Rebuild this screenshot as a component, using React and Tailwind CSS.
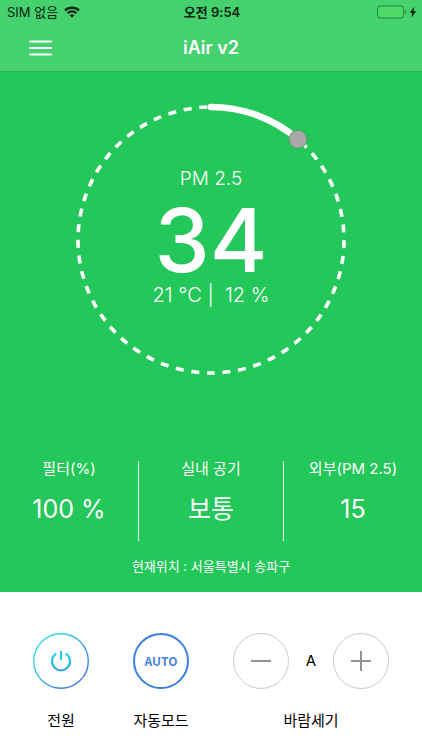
import React from "react";

function StatusBar() {
  return (
    <div className="grid grid-cols-3 items-center h-6 pb-px pl-[7px] pr-[5px] text-[13px] leading-4 text-[#0b2413]">
      <div className="flex items-center gap-1.5">
        <span className="whitespace-nowrap">SIM 없음</span>
        <svg aria-hidden="true" className="w-4 h-3" viewBox="0 0 16 12" fill="none" stroke="#06200e" strokeWidth="2.2">
          <path d="M1 4.4a10 10 0 0 1 14 0" />
          <path d="M3.7 7.2a6.2 6.2 0 0 1 8.6 0" />
          <path d="M8 11.8 5.6 9.3a3.5 3.5 0 0 1 4.8 0z" fill="#06200e" stroke="none" />
        </svg>
      </div>
      <span className="text-center font-semibold whitespace-nowrap">오전 9:54</span>
      <svg aria-hidden="true" className="w-10 h-4 justify-self-end" viewBox="0 0 40 16">
        <rect x="0.5" y="2" width="26" height="12" rx="2.5" fill="#4cd964" stroke="#21873f" />
        <path d="M28 6v4c1.6-.5 1.6-3.5 0-4z" fill="#21873f" />
        <path d="M37.5 2.5 32.8 8.800h2.600L34.300 13.500 39.200 7.300h-2.900z" fill="#06200e" />
      </svg>
    </div>
  );
}

function Gauge() {
  return (
    <div className="grid place-items-center">
      <svg aria-hidden="true" className="col-start-1 row-start-1 w-[280px] h-[280px]" viewBox="0 0 280 280" fill="none">
        <circle cx="140" cy="140" r="133" stroke="#fff" strokeWidth="3.6" strokeDasharray="8 7.767" strokeDashoffset="4" transform="rotate(90 140 140)" />
        <path d="M140 7A133 133 0 0 1 226.9 39.32" stroke="#fff" strokeWidth="6.6" strokeLinecap="round" />
        <circle cx="226.9" cy="39.3" r="9" fill="#a9a9a9" stroke="#559765" strokeWidth="1" />
      </svg>
      <div className="col-start-1 row-start-1 flex flex-col items-center pb-1.5">
        <p className="text-[19px] leading-6 font-light">PM 2.5</p>
        <p className="text-[88px] leading-[98px] font-medium">34</p>
        <p className="-mt-1.5 text-[20px] leading-6 font-light whitespace-pre">21 °C |  12 %</p>
      </div>
    </div>
  );
}

function Reading({ label, value }) {
  return (
    <div className="flex flex-col items-center h-20">
      <dt className="text-[15px] leading-4 whitespace-nowrap">{label}</dt>
      <dd className="mt-4 text-[25px] leading-8 whitespace-nowrap">{value}</dd>
    </div>
  );
}

function RoundButton({ label, className, children }) {
  return (
    <button type="button" aria-label={label} className={"flex items-center justify-center w-14 h-14 shrink-0 rounded-full " + className}>
      {children}
    </button>
  );
}

function Controls() {
  return (
    <section className="flex justify-between px-[33px] pt-[41px] pb-4 bg-white text-black text-[15px] leading-6">
      <div className="flex flex-col items-center gap-5">
        <RoundButton label="전원" className="">
          <svg aria-hidden="true" className="w-14 h-14" viewBox="0 0 56 56" fill="none">
            <defs>
              <linearGradient id="ring" x1="0" y1="0" x2="1" y2="1">
                <stop offset="0.25" stopColor="#38d5e8" />
                <stop offset="0.85" stopColor="#3f7be0" />
              </linearGradient>
              <linearGradient id="power" x1="0" y1="0" x2="0" y2="1">
                <stop offset="0" stopColor="#23d5e8" />
                <stop offset="1" stopColor="#35a6dc" />
              </linearGradient>
            </defs>
            <circle cx="28" cy="28" r="27.3" stroke="url(#ring)" strokeWidth="1.4" />
            <path d="M23.3 20.6a9 9 0 1 0 9.400 0" stroke="url(#power)" strokeWidth="2.2" />
            <rect x="27" y="18" width="2" height="9" fill="#23cfe6" />
          </svg>
        </RoundButton>
        <span>전원</span>
      </div>
      <div className="flex flex-col items-center gap-5">
        <RoundButton label="자동모드" className="border-2 border-[#3a80e0] text-[12px] font-bold text-[#4584dc] font-['Noto_Sans_CJK_KR',sans-serif]">
          AUTO
        </RoundButton>
        <span>자동모드</span>
      </div>
      <div className="flex flex-col items-center gap-5">
        <div className="flex items-center gap-4">
          <RoundButton label="바람세기 낮추기" className="border border-[#c9cace]">
            <svg aria-hidden="true" className="w-5 h-5" viewBox="0 0 20 20" stroke="#929297" strokeWidth="2">
              <path d="M0 10h20" />
            </svg>
          </RoundButton>
          <span className="w-3 text-center">A</span>
          <RoundButton label="바람세기 높이기" className="border border-[#c9cace]">
            <svg aria-hidden="true" className="w-5 h-5" viewBox="0 0 20 20" stroke="#929297" strokeWidth="2">
              <path d="M0 10h20M10 0v20" />
            </svg>
          </RoundButton>
        </div>
        <span>바람세기</span>
      </div>
    </section>
  );
}

export default function App() {
  return (
    <div className="min-h-screen bg-white text-white font-['Inter','Noto_Sans_CJK_KR',sans-serif]">
      <header className="bg-[#45d16e] border-b border-[#2cae54]">
        <StatusBar />
        <div className="grid grid-cols-3 items-center h-[47px] px-7">
          <button type="button" aria-label="메뉴" className="w-6 h-6">
            <svg aria-hidden="true" className="w-6 h-6" viewBox="0 0 24 24" stroke="#fff" strokeWidth="2" strokeLinecap="round">
              <path d="M2 5.500h21M2 12h21M2 18.500h21" />
            </svg>
          </button>
          <h1 className="text-center text-[18px] font-semibold">iAir v2</h1>
        </div>
      </header>
      <main className="bg-[#24c75a] pt-7 pb-4">
        <Gauge />
        <dl className="mt-[81px] grid grid-cols-[1fr_1px_144px_1px_1fr]">
          <Reading label="필터(%)" value="100 %" />
          <div className="w-px bg-white" />
          <Reading label="실내 공기" value="보통" />
          <div className="w-px bg-white" />
          <Reading label="외부(PM 2.5)" value="15" />
        </dl>
        <p className="mt-[15px] text-center text-[13px] leading-5">현재위치 : 서울특별시 송파구</p>
      </main>
      <Controls />
    </div>
  );
}
